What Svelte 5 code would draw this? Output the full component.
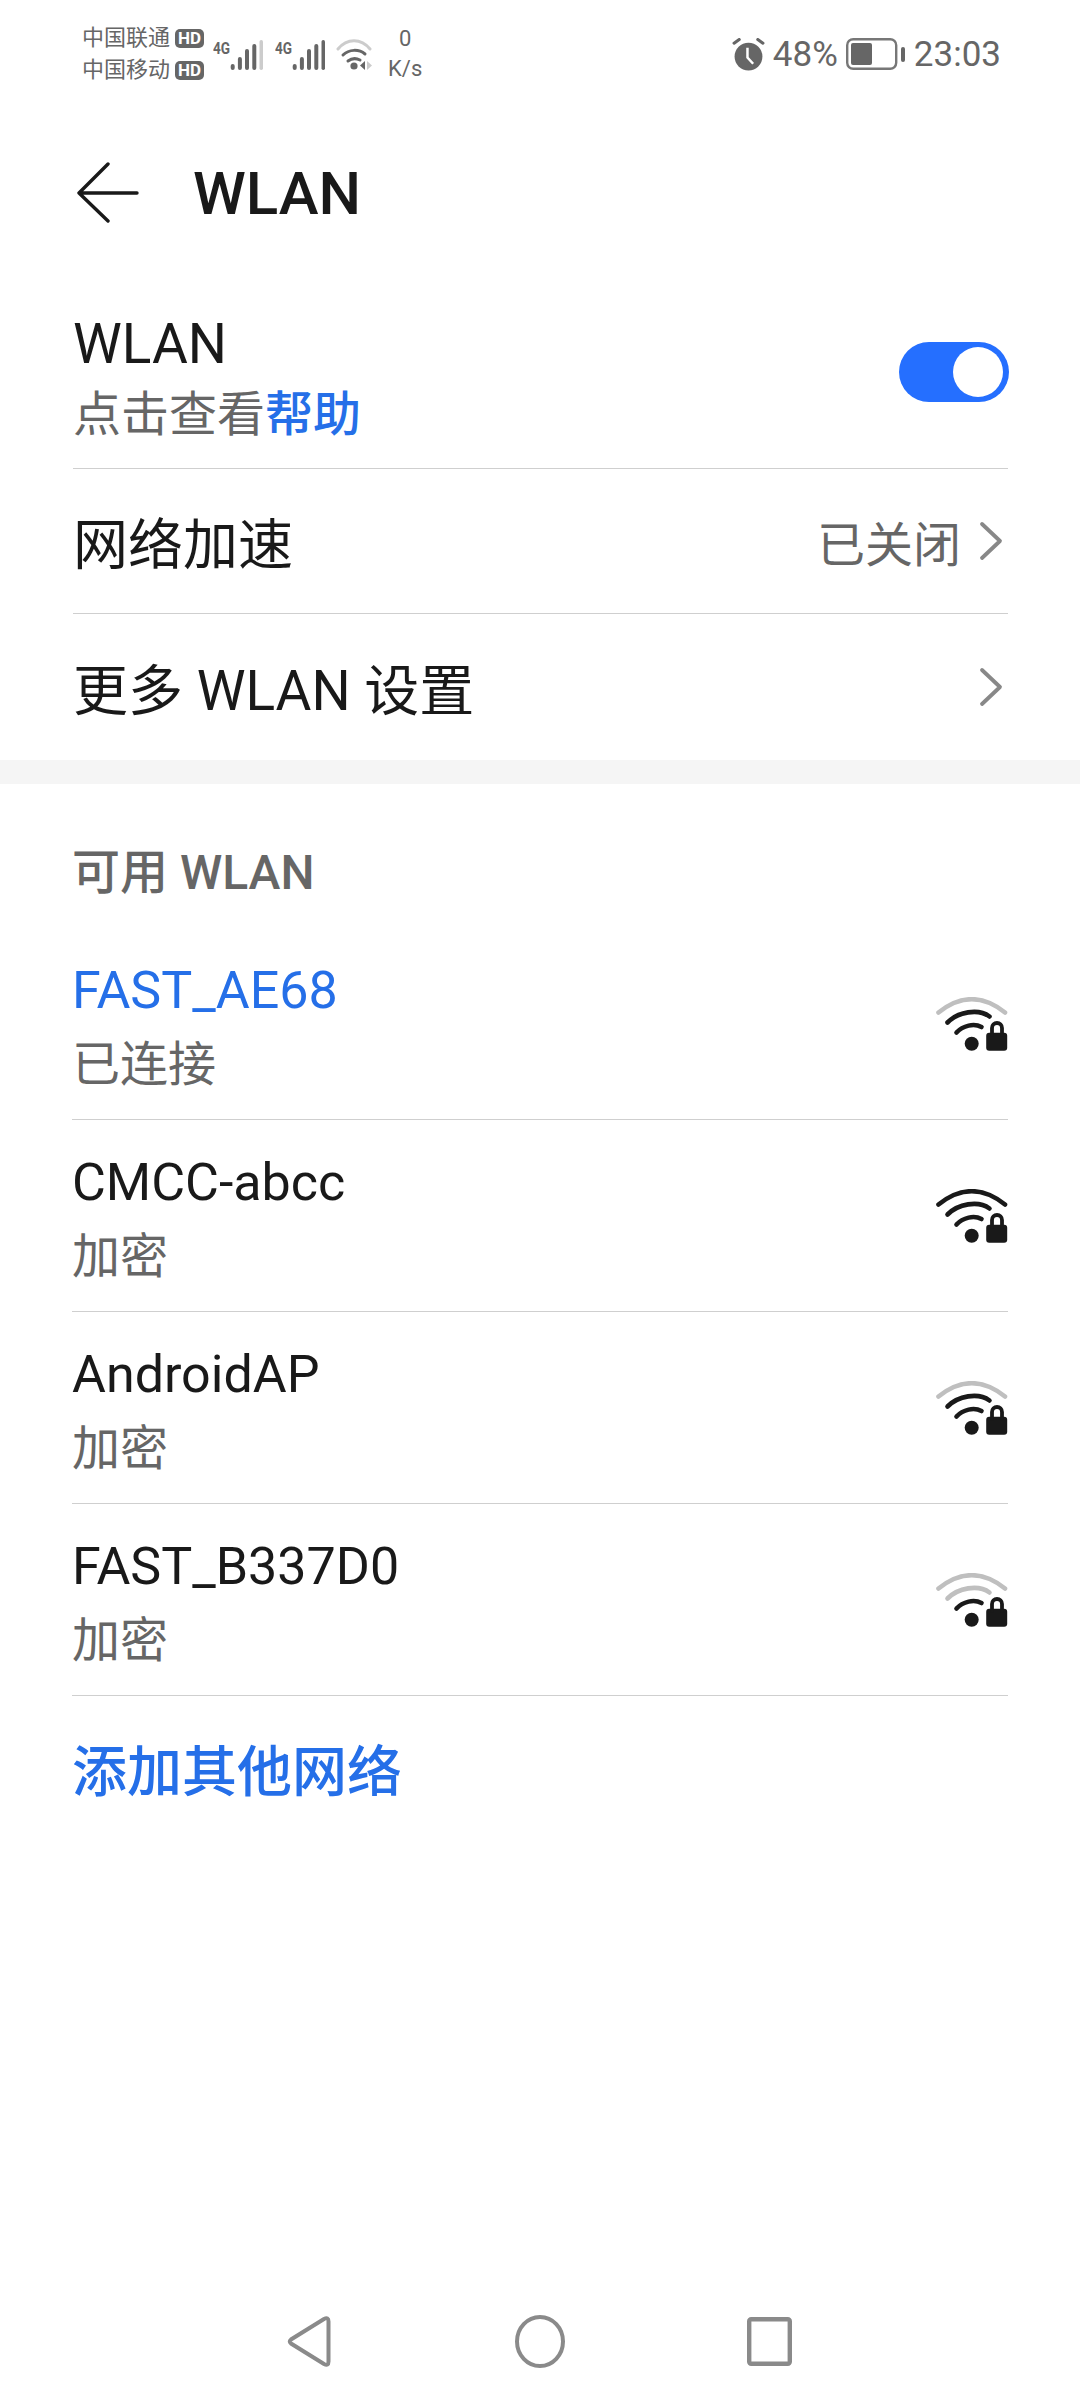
<script>
	const networks = [
		{ name: 'FAST_AE68', status: '已连接', level: 2, active: true },
		{ name: 'CMCC-abcc', status: '加密', level: 3 },
		{ name: 'AndroidAP', status: '加密', level: 2 },
		{ name: 'FAST_B337D0', status: '加密', level: 1 }
	];
	const arcs = [
		{ d: 'M2.500 15.500Q35.700 -11 69 15.500', min: 3 },
		{ d: 'M11.500 25.500C22 15 42 11 53.500 19.500', min: 2 },
		{ d: 'M20.500 35.500C27 28.500 38 26 45.500 30', min: 1 }
	];
</script>

<div class="page">
	<div class="status">
		<div class="carriers">
			<div class="carrier">中国联通 <span class="hd">HD</span></div>
			<div class="carrier">中国移动 <span class="hd">HD</span></div>
		</div>
		<div class="sim">
			<span class="g">4G</span>
			<svg width="36" height="32" viewBox="0 0 36 32">
				<g fill="#666">
					<rect x="0.700" y="25" width="4" height="6" rx="2" />
					<rect x="7.900" y="18" width="4" height="13" rx="2" />
					<rect x="15" y="10" width="4" height="21" rx="2" />
					<rect x="22.300" y="5" width="4" height="26" rx="2" />
				</g>
				<rect x="29.500" y="1" width="3.500" height="30" rx="1.700" fill="#ccc" />
			</svg>
		</div>
		<div class="sim">
			<span class="g">4G</span>
			<svg width="36" height="32" viewBox="0 0 36 32">
				<g fill="#666">
					<rect x="0.700" y="25" width="4" height="6" rx="2" />
					<rect x="7.900" y="18" width="4" height="13" rx="2" />
					<rect x="15" y="10" width="4" height="21" rx="2" />
					<rect x="22.300" y="5" width="4" height="26" rx="2" />
					<rect x="29.500" y="1" width="3.500" height="30" rx="1.700" />
				</g>
			</svg>
		</div>
		<svg class="wifi-small" width="38" height="32" viewBox="0 0 38 32" fill="none" stroke-linecap="round">
			<path d="M2 11C11 0 25 0 34 11" stroke="#ccc" stroke-width="3" />
			<path d="M7 17C13 11 23 11 29 16" stroke="#666" stroke-width="3" />
			<path d="M12 23C16 20 20 20 24 22" stroke="#666" stroke-width="3" />
			<circle cx="18" cy="28" r="3.600" fill="#666" stroke="none" />
			<path d="M29 23v9l-5-4.500z" fill="#666" stroke="none" />
			<path d="M31 23v9l5-4.500z" fill="#ccc" stroke="none" />
		</svg>
		<div class="speed"><span>0</span><span>K/s</span></div>
		<div class="status-right">
			<svg width="33" height="33" viewBox="0 0 32 32" fill="#666">
				<path d="M2 5l5-3.500M30 5l-5-3.500" stroke="#666" stroke-width="3" stroke-linecap="round" />
				<circle cx="16" cy="18" r="13.500" />
				<path d="M15 9.500v9.500l5.500 6" fill="none" stroke="#fff" stroke-width="2.400" />
			</svg>
			<span>48%</span>
			<svg width="60" height="32" viewBox="0 0 60 32">
				<rect x="1.200" y="1.200" width="49" height="29.600" rx="6" fill="none" stroke="#777" stroke-width="2.400" />
				<rect x="5" y="5" width="21" height="22" rx="2" fill="#666" />
				<rect x="55" y="9" width="4" height="15" rx="2" fill="#666" />
			</svg>
			<span>23:03</span>
		</div>
	</div>

	<header class="title-bar">
		<svg width="62" height="62" viewBox="0 0 62 62" fill="none" stroke="#191919" stroke-width="3.400" stroke-linecap="round" stroke-linejoin="round">
			<path d="M60 31H2M31 2L2 31L31 59" />
		</svg>
		<h1>WLAN</h1>
	</header>

	<section class="settings">
		<div class="row main">
			<div>
				<div class="big">WLAN</div>
				<div class="sub">点击查看<b>帮助</b></div>
			</div>
			<div class="toggle"><span></span></div>
		</div>
		<div class="row plain">
			<div class="big">网络加速</div>
			<div class="value">已关闭
				<svg class="chev" width="24" height="40" viewBox="0 0 24 40" fill="none"><path d="M3 3l18 17L3 37" /></svg>
			</div>
		</div>
		<div class="row plain">
			<div class="big">更多 WLAN 设置</div>
			<div class="value">
				<svg class="chev" width="24" height="40" viewBox="0 0 24 40" fill="none"><path d="M3 3l18 17L3 37" /></svg>
			</div>
		</div>
	</section>

	<div class="gap"></div>

	<section class="available">
		<h2>可用 WLAN</h2>
		{#each networks as net}
			<div class="net">
				<div class="net-text">
					<div class="net-name" class:active={net.active}>{net.name}</div>
					<div class="net-status">{net.status}</div>
				</div>
				<svg width="72" height="54" viewBox="0 0 72 54" fill="none" stroke-linecap="round" stroke-width="4.600">
					{#each arcs as arc}
						<path d={arc.d} stroke={net.level >= arc.min ? '#191919' : '#bfbfbf'} />
					{/each}
					<circle cx="35.700" cy="46.700" r="7" fill="#191919" stroke="none" />
					<rect x="50.200" y="35.700" width="21" height="18" rx="3" fill="#191919" stroke="none" />
					<path d="M56 38V31a5 5 0 0 1 10 0V38" stroke="#191919" stroke-width="3.800" />
				</svg>
			</div>
		{/each}
		<div class="add">添加其他网络</div>
	</section>

	<nav class="nav">
		<svg width="46" height="53" viewBox="0 0 46 53" fill="none" stroke="#8a8a8a" stroke-width="4">
			<path d="M37 4Q41.500 1.500 41.500 6.500V46.500Q41.500 51.500 37 49L4 28.500Q1.500 26.500 4 24.500Z" />
		</svg>
		<svg width="50" height="53" viewBox="0 0 50 53" fill="none" stroke="#8a8a8a" stroke-width="4">
			<ellipse cx="25" cy="26.500" rx="23" ry="24.500" />
		</svg>
		<svg width="45" height="49" viewBox="0 0 45 49" fill="none" stroke="#8a8a8a" stroke-width="4.400" stroke-linejoin="round">
			<rect x="2.200" y="2.200" width="40.600" height="44.600" rx="2" />
		</svg>
	</nav>
</div>

<style>
	:global(body) {
		margin: 0;
		background: #fff;
	}
	.page {
		height: 2400px;
		display: flex;
		flex-direction: column;
		font-family: Roboto, 'Noto Sans CJK SC', sans-serif;
		color: #191919;
		overflow: hidden;
	}
	.status {
		display: flex;
		align-items: center;
		height: 108px;
		padding: 0 79px 0 82px;
		color: #666;
		box-sizing: border-box;
	}
	.carriers {
		width: 122px;
		font-size: 22px;
		line-height: 32px;
		margin-right: 9px;
	}
	.carrier {
		white-space: nowrap;
		display: flex;
		align-items: center;
		gap: 5px;
	}
	.hd {
		background: #666;
		color: #fff;
		font-size: 17px;
		font-weight: 700;
		line-height: 19px;
		padding: 0 3px;
		border-radius: 5px;
	}
	.sim {
		display: flex;
		align-items: flex-start;
		width: 62px;
	}
	.sim svg {
		margin-top: 2px;
	}
	.g {
		font-size: 17px;
		font-weight: 700;
		transform: scaleX(0.8);
		transform-origin: left;
		width: 17px;
		line-height: 18px;
		margin-top: 2px;
	}
	.wifi-small {
		margin-left: -1px;
	}
	.speed {
		display: flex;
		flex-direction: column;
		align-items: center;
		font-size: 22px;
		line-height: 30px;
		margin-left: 14px;
	}
	.status-right {
		margin-left: auto;
		display: flex;
		align-items: center;
		gap: 8px;
		font-size: 35px;
	}
	.title-bar {
		display: flex;
		align-items: center;
		gap: 54px;
		height: 70px;
		padding: 0 0 0 77px;
		margin-top: 50px;
	}
	h1 {
		margin: 0;
		font-size: 60px;
		font-weight: 500;
	}
	.settings {
		margin: 48px 72px 0 73px;
	}
	.row {
		display: flex;
		align-items: center;
		justify-content: space-between;
		border-bottom: 1.500px solid #cfcfcf;
		box-sizing: border-box;
	}
	.main {
		height: 193px;
		padding-top: 12px;
	}
	.plain {
		height: 145px;
	}
	.plain .big {
		padding-top: 8px;
	}
	.plain:last-child {
		border-bottom: 0;
		height: 146px;
	}
	.big {
		font-size: 55px;
		line-height: 64px;
	}
	.sub {
		font-size: 48px;
		line-height: 58px;
		color: #666;
		margin-top: 10px;
	}
	.sub b {
		color: #256fe8;
		font-weight: 500;
	}
	.toggle {
		width: 110px;
		height: 60px;
		border-radius: 30px;
		background: #256fff;
		display: flex;
		justify-content: flex-end;
		align-items: center;
		padding-right: 6px;
		box-sizing: border-box;
		margin: -12px -1px 0 0;
	}
	.toggle span {
		width: 50px;
		height: 50px;
		border-radius: 50%;
		background: #fff;
	}
	.value {
		display: flex;
		align-items: center;
		gap: 18px;
		font-size: 48px;
		color: #666;
		margin: 0 5px 0 0;
	}
	.chev {
		stroke: #888;
		stroke-width: 3.800;
		stroke-linecap: round;
		stroke-linejoin: round;
	}
	.gap {
		height: 24px;
		background: #f5f5f5;
	}
	.available {
		margin: 0 72px;
	}
	h2 {
		margin: 0;
		font-size: 48px;
		font-weight: 500;
		color: #666;
		line-height: 56px;
		padding: 61px 0 27px;
	}
	.net {
		height: 192px;
		display: flex;
		align-items: center;
		justify-content: space-between;
		border-bottom: 1.500px solid #cfcfcf;
		box-sizing: border-box;
	}
	.net-text {
		padding-top: 4px;
	}
	.net-name {
		font-size: 52px;
		line-height: 66px;
	}
	.net-name.active {
		color: #256fe8;
	}
	.net-status {
		font-size: 48px;
		line-height: 58px;
		color: #666;
		margin-top: 12px;
	}
	.add {
		font-size: 55px;
		font-weight: 500;
		color: #256fe8;
		padding-top: 31px;
	}
	.nav {
		margin-top: auto;
		height: 118px;
		padding: 1px 0 0 287px;
		box-sizing: border-box;
		display: flex;
		align-items: center;
		gap: 182px;
	}
</style>
